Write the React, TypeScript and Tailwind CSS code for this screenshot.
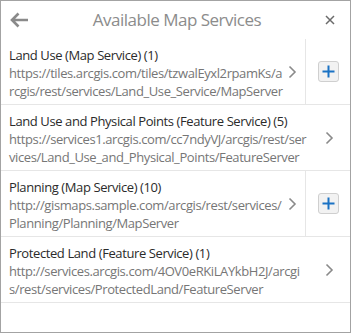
import React from "react";

type Service = {
  title: string;
  lines: string[];
  canAdd: boolean;
};

const services: Service[] = [
  {
    title: "Land Use (Map Service) (1)",
    lines: ["https://tiles.arcgis.com/tiles/tzwalEyxl2rpamKs/a", "rcgis/rest/services/Land_Use_Service/MapServer"],
    canAdd: true,
  },
  {
    title: "Land Use and Physical Points (Feature Service) (5)",
    lines: ["https://services1.arcgis.com/cc7ndyVJ/arcgis/rest/ser", "vices/Land_Use_and_Physical_Points/FeatureServer"],
    canAdd: false,
  },
  {
    title: "Planning (Map Service) (10)",
    lines: ["http://gismaps.sample.com/arcgis/rest/services/", "Planning/Planning/MapServer"],
    canAdd: true,
  },
  {
    title: "Protected Land (Feature Service) (1)",
    lines: ["http://services.arcgis.com/4OV0eRKiLAYkbH2J/arcgi", "s/rest/services/ProtectedLand/FeatureServer"],
    canAdd: false,
  },
];

function Chevron() {
  return (
    <svg width="9" height="14" viewBox="0 0 9 14" fill="none" className="shrink-0">
      <path d="M1.5 1.5L7 7l-5.5 5.5" stroke="#8a8a8a" strokeWidth="1.6" />
    </svg>
  );
}

function ServiceRow({ s }: { s: Service }) {
  return (
    <div className="flex h-[66px] border-b border-[#e6e6e6]">
      <div className={"flex flex-1 items-center min-w-0 pl-2 " + (s.canAdd ? "pr-[8px]" : "pr-[16px]")}>
        <div className="flex-1 min-w-0 pt-[3px] text-[13px] leading-[18px] tracking-[-0.4px] whitespace-nowrap">
          <div className="text-[#2b2b2b]">{s.title}</div>
          {s.lines.map((l) => (
            <div key={l} className="text-[#767676]">
              {l}
            </div>
          ))}
        </div>
        <Chevron />
      </div>
      {s.canAdd && (
        <div className="flex w-[45px] items-center justify-center border-l border-[#e6e6e6]">
          <button className="flex h-[21px] w-[21px] items-center justify-center rounded-[3px] border border-[#cfcfcf] bg-[#f2f2f2]">
            <svg width="13" height="13" viewBox="0 0 13 13">
              <path d="M6.5 0.5v12M0.5 6.5h12" stroke="#1a72c4" strokeWidth="2" />
            </svg>
          </button>
        </div>
      )}
    </div>
  );
}

export default function App() {
  return (
    <div
      className="w-[351px] h-[333px] border border-[#a3a3a3] bg-white overflow-hidden"
      style={{ fontFamily: '"Open Sans", "Noto Sans", sans-serif' }}
    >
      {/* header */}
      <div className="flex h-[38px] items-center px-2">
        <svg width="20" height="18" viewBox="0 0 20 18" fill="none" className="shrink-0">
          <path d="M19 9H3M9.5 2.5L3 9l6.5 6.5" stroke="#8a8a8a" strokeWidth="2.6" />
        </svg>
        <div className="flex-1 text-center text-[17px] text-[#8c8c8c] tracking-[-0.5px]">Available Map Services</div>
        <svg width="10" height="10" viewBox="0 0 10 10" className="mr-[7px] shrink-0">
          <path d="M1 1l8 8M9 1l-8 8" stroke="#6b6b6b" strokeWidth="1.5" />
        </svg>
      </div>
      {services.map((s) => (
        <ServiceRow key={s.title} s={s} />
      ))}
    </div>
  );
}
